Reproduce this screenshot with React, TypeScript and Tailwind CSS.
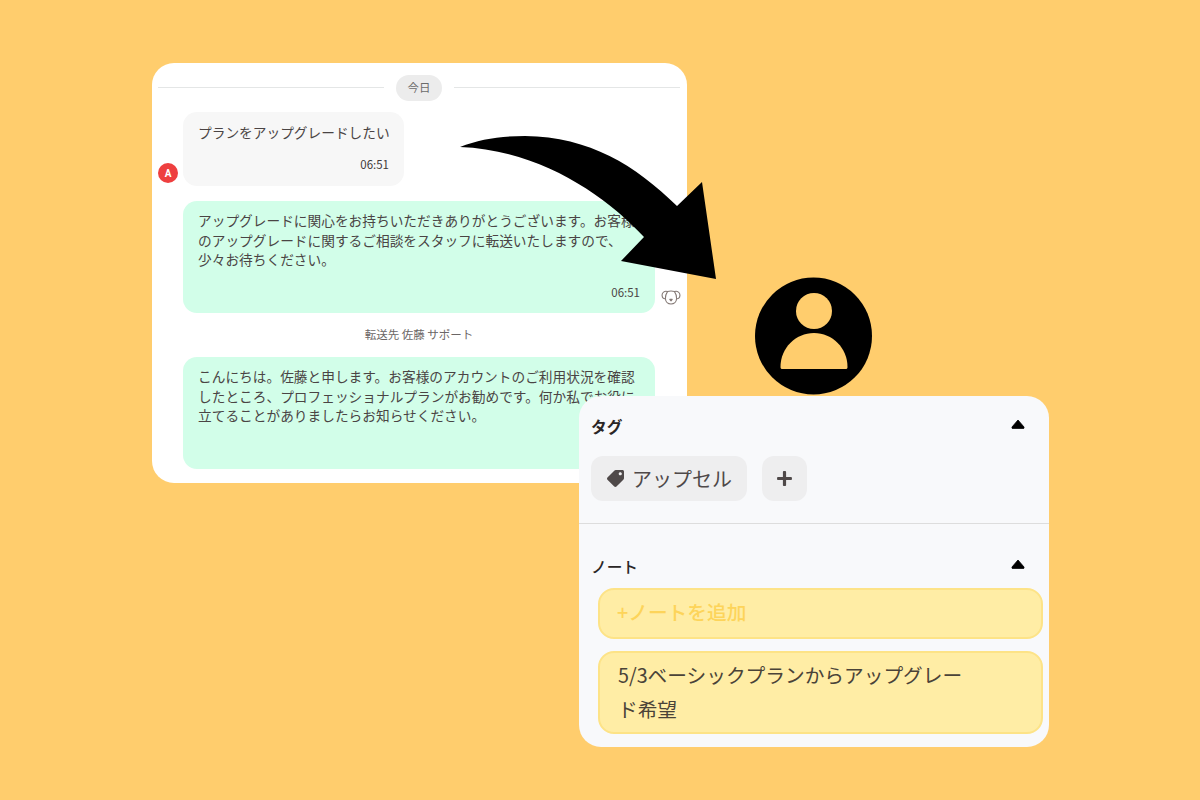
import React from 'react';
import { FaPlus, FaTag } from 'react-icons/fa';

const font = "font-['Noto_Sans_CJK_JP','Noto_Sans',sans-serif]";

const Triangle = () => (
  <svg className="-mt-[6px]" width="14" height="10" viewBox="0 0 14 10">
    <path d="M7 1 L13 8 Q13.4 9.6 12 9.6 L2 9.6 Q0.6 9.6 1 8 Z" fill="#000" stroke="#000" strokeWidth="0.8" strokeLinejoin="round" />
  </svg>
);

const DogIcon = () => (
  <svg className="shrink-0" width="20" height="15" viewBox="0 0 20 15" fill="none" stroke="#857a76" strokeWidth="1.1" strokeLinejoin="round" strokeLinecap="round">
    <path d="M6.5 1.6 C8.5 0.9 11.5 0.9 13.5 1.6 C16.5 0.6 19.2 2.6 18.9 5.6 C18.7 7.8 17.4 9 15.6 8.6 C15.4 11.8 13 14 10 14 C7 14 4.6 11.8 4.4 8.6 C2.6 9 1.3 7.8 1.1 5.6 C0.8 2.6 3.5 0.6 6.5 1.6 Z" />
    <path d="M6.5 1.6 C5.2 3.4 4.4 6 4.4 8.6" />
    <path d="M13.5 1.6 C14.8 3.4 15.6 6 15.6 8.6" />
    <path d="M8.8 9.4 H11.2 L10 10.8 Z" fill="#857a76" />
  </svg>
);

const ChatCard = () => (
  <div className="absolute left-[152px] top-[63px] w-[535px] h-[420px] rounded-[22px] bg-white overflow-hidden pl-[6px] pr-[7px] pt-[12px]">
    <div className="flex items-center">
      <div className="flex-1 h-px mb-[2px] bg-[#e4e6e6]" />
      <div className="mx-3 w-[46px] h-[26px] rounded-full bg-[#ececec] flex items-center justify-center text-[11.5px] text-[#6b6b6b]">今日</div>
      <div className="flex-1 h-px mb-[2px] bg-[#e4e6e6]" />
    </div>
    <div className="mt-[11px] flex items-end gap-[5px]">
      <div className="mb-[3px] w-[20px] h-[20px] rounded-full bg-[#ee3f3f] flex items-center justify-center text-[10px] font-bold text-white font-['Roboto',sans-serif]">A</div>
      <div className="w-[221px] h-[74px] rounded-[14px] bg-[#f7f7f7] pl-[15px] pr-[10px] pt-[10px]">
        <p className="text-[13.7px] leading-[20px] text-[#4a4444]">プランをアップグレードしたい</p>
        <p className="mt-[14px] pr-[5px] text-right text-[11.5px] leading-[16px] text-[#3f3a3a]">06:51</p>
      </div>
    </div>
    <div className="mt-[15px] ml-[25px] flex items-end gap-[6px]">
      <div className="shrink-0 w-[472px] h-[112px] rounded-[14px] bg-[#d2fee9] pl-[15px] pr-[15px] pt-[10px]">
        <p className="text-[13.7px] leading-[19.5px] text-[#4a4444]">アップグレードに関心をお持ちいただきありがとうございます。お客様のアップグレードに関するご相談をスタッフに転送いたしますので、少々お待ちください。</p>
        <p className="mt-[14px] text-right text-[11.5px] leading-[16px] text-[#4a4444]">06:51</p>
      </div>
      <div className="mb-[8px]"><DogIcon /></div>
    </div>
    <p className="mt-[12px] text-center text-[11.5px] leading-[18px] text-[#6b6666]">転送先 佐藤 サポート</p>
    <div className="mt-[14px] ml-[25px] w-[472px] h-[112px] rounded-[14px] bg-[#d2fee9] pl-[15px] pr-[15px] pt-[10px]">
      <p className="text-[13.7px] leading-[19.5px] text-[#4a4444]">こんにちは。佐藤と申します。お客様のアカウントのご利用状況を確認したところ、プロフェッショナルプランがお勧めです。何か私でお役に立てることがありましたらお知らせください。</p>
    </div>
  </div>
);

const Arrow = () => (
  <svg className="absolute left-0 top-0" width="1200" height="800" viewBox="0 0 1200 800">
    <path
      d="M460 147 C480 139 500 136 525 136 C590 137 635 165 677 206 L702 182 L716 279 L621 261 L644 237 C605 195 540 150 460 147 Z"
      fill="#000"
    />
  </svg>
);

const PersonIcon = () => (
  <svg className="absolute left-[754px] top-[277px]" width="118" height="118" viewBox="0 0 118 118">
    <circle cx="59.5" cy="59" r="58.5" fill="#000" />
    <circle cx="60" cy="34" r="18" fill="#ffcd6d" />
    <path d="M26.5 90 C26.5 71 41.5 56 60 56 C78.5 56 93.5 71 93.5 90 C93.5 91.5 93 92 91.5 92 L28.5 92 C27 92 26.5 91.5 26.5 90 Z" fill="#ffcd6d" />
  </svg>
);

const TagPanel = () => (
  <div className="absolute left-[579px] top-[396px] w-[470px] h-[351px] rounded-[22px] bg-[#f8f9fb]">
    <div className="h-[128px] border-b border-[#dddddd] px-[12px] pt-[20px]">
      <div className="flex items-center justify-between pr-[12px] h-[22px]">
        <span className="text-[15.7px] font-bold leading-[22px] text-[#2a2626]">タグ</span>
        <Triangle />
      </div>
      <div className="mt-[18px] flex gap-[15px]">
        <div className="w-[156px] h-[45px] rounded-[12px] bg-[#eeeeef] flex items-center pl-[16px] gap-[8px] text-[#4f4949]">
          <FaTag className="w-[17px] h-[17px] -scale-x-100" />
          <span className="text-[20px] leading-[28px]">アップセル</span>
        </div>
        <div className="w-[45px] h-[45px] rounded-[12px] bg-[#eeeeef] flex items-center justify-center text-[#4f4949]">
          <FaPlus className="w-[17px] h-[17px]" />
        </div>
      </div>
    </div>
    <div className="px-[12px] pt-[32px]">
      <div className="flex items-center justify-between pr-[12px] h-[22px]">
        <span className="text-[15.7px] font-medium leading-[22px] text-[#2a2626]">ノート</span>
        <Triangle />
      </div>
      <div className="ml-[7px] mr-[-6px] mt-[10px] flex flex-col gap-[12px]">
        <div className="h-[51px] rounded-[16px] border-2 border-[#fde387] bg-[#ffeda5] pl-[17px] pb-[4px] flex items-center text-[19.7px] font-medium text-[#fdd45a]">+ノートを追加</div>
        <div className="h-[83px] rounded-[16px] border-2 border-[#fde387] bg-[#ffeda5] pl-[18px] pr-[75px] pt-[5px] text-[19.7px] leading-[34px] text-[#4a4338]">5/3ベーシックプランからアップグレード希望</div>
      </div>
    </div>
  </div>
);

export default function App() {
  return (
    <div className={`relative w-[1200px] h-[800px] overflow-hidden bg-[#ffcd6d] ${font}`}>
      <ChatCard />
      <Arrow />
      <PersonIcon />
      <TagPanel />
    </div>
  );
}
